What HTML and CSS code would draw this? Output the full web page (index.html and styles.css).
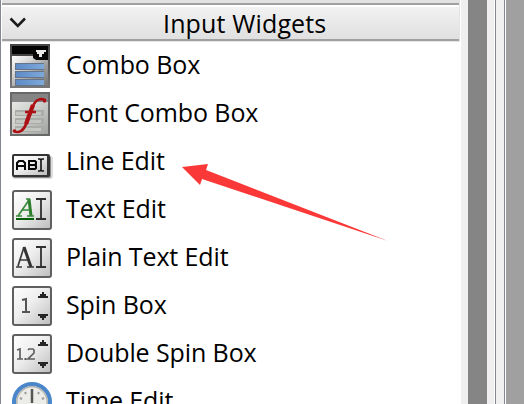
FILE: index.html
```html
<!DOCTYPE html>
<html lang="en">
<head>
<meta charset="utf-8">
<title>Widget Box</title>
<link rel="stylesheet" href="styles.css">
</head>
<body>
<div class="window">
  <main class="panel">
    <header class="category">
      <svg class="chevron" width="18" height="14" viewBox="0 0 18 14"><path d="M1.5 2.5 8.8 9.8 16 2.5"/></svg>
      <h1>Input Widgets</h1>
    </header>
    <ul class="widgets">
      <li>
        <svg class="icon" viewBox="0 0 44 48">
          <defs>
            <linearGradient id="sheet" x2="1" y2="1"><stop stop-color="#fff"/><stop offset=".3" stop-color="#d8d8d8"/><stop offset=".65" stop-color="#989898"/><stop offset="1" stop-color="#777"/></linearGradient>
            <linearGradient id="paper" x2="1" y2="1"><stop stop-color="#e6e7e4"/><stop offset=".5" stop-color="#c8cac7"/><stop offset="1" stop-color="#a0a29f"/></linearGradient>
            <linearGradient id="light" x2="1" y2="1"><stop stop-color="#fff"/><stop offset=".45" stop-color="#eee"/><stop offset="1" stop-color="#bdbdbd"/></linearGradient>
            <linearGradient id="blue" x2="1"><stop stop-color="#5c8ac6"/><stop offset="1" stop-color="#7ea9da"/></linearGradient>
            <linearGradient id="frame" x2="0" y2="1"><stop stop-color="#444"/><stop offset="1" stop-color="#777"/></linearGradient>
          </defs>
          <path fill="url(#frame)" d="M0 2h40v44H0z"/><path fill="url(#sheet)" d="M2 14h36v30H2z"/>
          <path fill="#050505" d="M2 4h36v14H26l-3-2v-4H2z"/><path fill="#444" d="M2 12h21v2H2z"/><path fill="#e8e8e8" d="M26 8h10v2h-2v2h-2v3h-3v-3h-2v-2h-1z"/>
          <path fill="#64758b" d="M5 21h29v7H5zM5 29h29v7H5zM5 37h29v7H5z"/>
          <path fill="url(#blue)" d="M6 22h28v5H6zM6 30h28v5H6zM6 38h28v5H6z"/>
        </svg><span>Combo Box</span>
      </li>
      <li>
        <svg class="icon" viewBox="0 0 44 48">
          <path fill="#686868" d="M0 2h40v44H0z"/><path fill="#858585" d="M2 4h36v8H2z"/>
          <path fill="url(#paper)" d="M2 12h36v32H2z"/>
          <path fill="#aaaca9" d="M5 20h29v6H5zM5 28h29v6H5zM5 36h29v6H5z"/><path fill="#c4c6c2" d="M6 22h25v3H6zM6 30h25v3H6zM6 38h25v3H6z"/>
          <path fill="none" stroke="#ac1014" stroke-width="2.6" stroke-linecap="round" d="M35 10C31 8 26 9 23 16l-7 18c-2 6-7 10-12 7"/>
          <path fill="none" stroke="#ac1014" stroke-width="4.2" d="M23 15l-7 19"/><path fill="none" stroke="#ac1014" stroke-width="2.5" d="M15 22h11"/><circle cx="34.500" cy="11" r="1.700" fill="#ac1014"/><circle cx="4.500" cy="41" r="1.700" fill="#ac1014"/>
        </svg><span>Font Combo Box</span>
      </li>
      <li>
        <svg class="icon" viewBox="0 0 44 48">
          <rect x="2" y="18" width="41" height="23" rx="3" fill="#ddd"/><rect x="3" y="18" width="38" height="22" rx="2" fill="#8a8a8a"/>
          <rect x="2" y="16" width="38" height="23" rx="2" fill="#333"/><path fill="url(#light)" d="M4 18h33v19H4z"/>
          <g fill="none" stroke="#050505" stroke-width="2"><path d="M7 32v-7l2-2h4l2 2v7M7 28h8M19 32v-9h6l1 1v2l-1 1h-6M25 27l1 1v2l-1 1h-6"/></g><path fill="none" stroke="#111" stroke-width="1.6" d="M28 21h2l1 1 1-1h2M31 22v10M28 33h2l1-1 1 1h2"/>
        </svg><span>Line Edit</span>
      </li>
      <li>
        <svg class="icon" viewBox="0 0 44 48"><rect x="3" y="5" width="38" height="38" rx="2" fill="url(#light)" stroke="#606060" stroke-width="2"/>
          <path fill="none" stroke="#3c8b3c" stroke-width="1.7" d="M8 30l11-16"/><path fill="none" stroke="#2c7e2c" stroke-width="3" d="M19 13l2 17"/><path fill="none" stroke="#398739" stroke-width="1.5" d="M16 13h4M12 24h8M6 30h6M17 30h7"/><path fill="#075f07" d="M6 32h18v2H6z"/>
          <path fill="none" stroke="#303030" stroke-width="1.8" d="M26 13h10M31 13v20M26 33h10"/>
        </svg><span>Text Edit</span>
      </li>
      <li>
        <svg class="icon" viewBox="0 0 44 48"><rect x="3" y="5" width="38" height="38" rx="2" fill="url(#light)" stroke="#606060" stroke-width="2"/>
          <path fill="none" stroke="#3b3b3b" stroke-width="1.7" d="M8 32l6-19M10 26h10M6 33h6M17 33h7"/><path fill="none" stroke="#333" stroke-width="3" d="M14 13l7 20"/>
          <path fill="none" stroke="#303030" stroke-width="1.8" d="M26 13h10M31 13v20M26 33h10"/>
        </svg><span>Plain Text Edit</span>
      </li>
      <li>
        <svg class="icon" viewBox="0 0 44 48"><rect x="3" y="5" width="38" height="38" rx="2" fill="url(#light)" stroke="#606060" stroke-width="2"/>
          <path fill="none" stroke="#555" stroke-width="2" d="M12 18l4-1v13M12 30h8"/><path fill="#252525" d="M28 16v-2h2v-2h2v-2h2v2h2v2h2v2zM28 32h10v2h-2v2h-2v2h-2v-2h-2v-2h-2z"/>
        </svg><span>Spin Box</span>
      </li>
      <li>
        <svg class="icon" viewBox="0 0 44 48"><rect x="3" y="5" width="38" height="38" rx="2" fill="url(#light)" stroke="#606060" stroke-width="2"/>
          <path fill="none" stroke="#606060" stroke-width="1.7" d="M7 20l3-1v10M7 29h6M18 20l1-1h4l1 1v3l-6 6h7"/><path fill="#555" d="M14.500 28h2v2h-2z"/><path fill="#252525" d="M28 16v-2h2v-2h2v-2h2v2h2v2h2v2zM28 32h10v2h-2v2h-2v2h-2v-2h-2v-2h-2z"/>
        </svg><span>Double Spin Box</span>
      </li>
      <li>
        <svg class="icon" viewBox="0 0 44 48"><circle cx="22" cy="24" r="18" fill="#ecece8" stroke="#4a86ca" stroke-width="4"/><circle cx="22" cy="24" r="15.200" fill="none" stroke="#b4b4b0" stroke-width="1.5"/><path fill="none" stroke="#555" stroke-width="2.5" d="M22 11v14"/><path stroke="#999" stroke-width="2" d="M15 14l1 2M29 14l-1 2M10 20l2 1M34 20l-2 1"/></svg><span>Time Edit</span>
      </li>
    </ul>
    <svg class="arrow" width="206" height="79" viewBox="0 0 206 79"><path d="M0 4 26 1l-2 6L206 78 20 16l-2 6z"/></svg>
  </main>
  <div class="gutter"></div>
  <div class="splitter"></div>
  <div class="canvas"></div>
</div>
</body>
</html>
```
FILE: styles.css
```css
* { box-sizing: border-box; }
body { margin: 0; overflow: hidden; background: #fff; font-family: "Open Sans", "Noto Sans", sans-serif; color: #000; }
.window { display: flex; width: 524px; height: 404px; overflow: hidden; }
.panel { position: relative; width: 461px; height: 404px; flex: none; padding-left: 1px; border-left: 1px solid #828790; overflow: hidden; }
.category {
  display: flex; align-items: center; width: 458px; height: 42px; padding: 7px 0 3px 7px;
  border-right: 1px solid #e3e3e3;
  background: linear-gradient(#e1e1e1 0 3px, #a0a0a0 3px 5px, #fff 5px 7px, #f2f2f2 7px, #e0e0e0 39px, #a0a0a0 39px 41px, #e3e3e3 41px);
}
.chevron { flex: none; fill: none; stroke: #1b1b1b; stroke-width: 2.6; }
h1 { margin: 0 0 0 136px; font-size: 25px; line-height: 32px; font-weight: 400; letter-spacing: .15px; white-space: nowrap; }
.widgets { margin: 0; padding: 0 0 0 8px; list-style: none; }
.widgets li { display: flex; height: 48px; font-size: 25px; line-height: 45px; letter-spacing: -.1px; white-space: nowrap; }
.icon { width: 44px; height: 48px; margin-right: 12px; flex: none; }
.arrow { position: absolute; left: 181px; top: 163px; fill: #fb3838; }
.gutter { width: 33px; flex: none; background: #858585; border: solid #efefef; border-width: 0 7px; }
.splitter { width: 12px; flex: none; background: linear-gradient(90deg, #fff 0 1px, #828790 1px 2px, #f0f0f0 2px 10px, #828790 10px 11px, #fff 11px); }
.canvas { flex: 1; background: #a0a0a0; }
```
